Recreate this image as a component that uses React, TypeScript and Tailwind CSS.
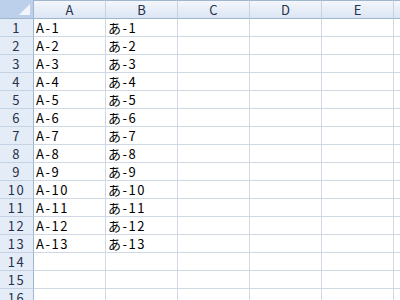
const cols = ['A', 'B', 'C', 'D', 'E'];
const rows = Array.from({ length: 16 }, (_, i) => i + 1);

const cellValue = (col: string, row: number) => {
  if (row > 13) return '';
  if (col === 'A') return `A-${row}`;
  if (col === 'B') return `あ-${row}`;
  return '';
};

export default function App() {
  return (
    <div
      className="h-[300px] w-[400px] overflow-hidden bg-white text-[13px] text-black"
      style={{ fontFamily: '"Noto Sans CJK JP", "Liberation Sans", sans-serif' }}
    >
      <div className="grid grid-cols-[34px_72px_72px_72px_72px_72px_1fr]">
        {/* header row */}
        <div className="relative h-[19px] border-r border-b border-[#9eb6ce] bg-[#bcd0ec]">
          <svg className="absolute right-[3px] bottom-[3px]" width="11" height="11" viewBox="0 0 11 11">
            <polygon points="11,0 11,11 0,11" fill="#f2f6fc" />
          </svg>
        </div>
        {cols.map((c) => (
          <div
            key={c}
            className="h-[19px] border-t border-r border-b border-t-[#9eb6ce] border-r-[#c5d2e3] border-b-[#9eb6ce] bg-gradient-to-b from-[#f3f6fb] to-[#dce6f4] text-center leading-[17px] text-[#27314a]"
          >
            {c}
          </div>
        ))}
        <div className="h-[19px] border-t border-b border-[#9eb6ce] bg-gradient-to-b from-[#f3f6fb] to-[#dce6f4]" />

        {rows.map((r) => (
          <RowCells key={r} row={r} />
        ))}
      </div>
    </div>
  );
}

function RowCells({ row }: { row: number }) {
  return (
    <>
      <div className="h-[18px] border-r border-b border-r-[#9eb6ce] border-b-[#c5d2e3] bg-[#e4ecf7] pt-[1px] text-center leading-[16px] tracking-[1.5px] text-[#27314a]">
        {row}
      </div>
      {cols.map((c) => (
        <div
          key={c}
          className="h-[18px] border-r border-b border-[#d0d7e5] pt-[1px] pl-[2px] leading-[16px] tracking-[1.5px]"
        >
          {cellValue(c, row)}
        </div>
      ))}
      <div className="h-[18px] border-b border-[#d0d7e5]" />
    </>
  );
}
